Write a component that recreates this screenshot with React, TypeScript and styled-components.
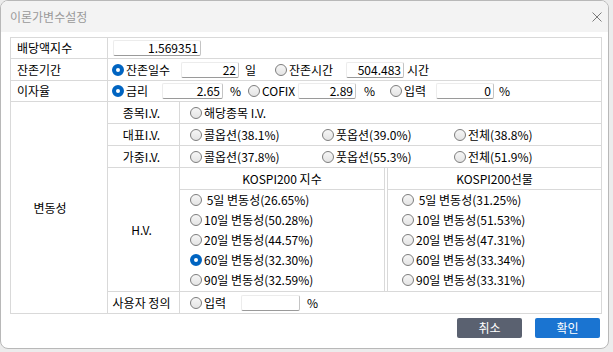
import React from "react";
import styled, { createGlobalStyle } from "styled-components";

const LINE = "#d9d9d9";

const GlobalStyle = createGlobalStyle`
  html, body {
    margin: 0;
    padding: 0;
    background: #ececec;
  }
  body {
    font-family: "Noto Sans CJK KR", "Noto Sans", sans-serif;
    font-size: 12px;
    color: #000;
  }
  * {
    box-sizing: border-box;
  }
`;

type Opt = { text: string; on?: boolean };

const ivRows: { label: string; opts: Opt[] }[] = [
  { label: "대표I.V.", opts: [{ text: "콜옵션(38.1%)" }, { text: "풋옵션(39.0%)" }, { text: "전체(38.8%)" }] },
  { label: "가중I.V.", opts: [{ text: "콜옵션(37.8%)" }, { text: "풋옵션(55.3%)" }, { text: "전체(51.9%)" }] },
];

const hvIndex: Opt[] = [
  { text: "\u00a05일 변동성(26.65%)" },
  { text: "10일 변동성(50.28%)" },
  { text: "20일 변동성(44.57%)" },
  { text: "60일 변동성(32.30%)", on: true },
  { text: "90일 변동성(32.59%)" },
];

const hvFutures: Opt[] = [
  { text: "\u00a05일 변동성(31.25%)" },
  { text: "10일 변동성(51.53%)" },
  { text: "20일 변동성(47.31%)" },
  { text: "60일 변동성(33.34%)" },
  { text: "90일 변동성(33.31%)" },
];

const Radio = ({ on, text, w, ml }: { on?: boolean; text: string; w?: number; ml?: number }) => (
  <OptLabel $w={w} $ml={ml}>
    <Dot $on={on} />
    <span>{text}</span>
  </OptLabel>
);

const App = () => {
  return (
    <>
      <GlobalStyle />
      <Window>
        <TitleBar>
          <Title>이론가변수설정</Title>
          <svg width="10" height="10" viewBox="0 0 10 10">
            <path d="M0.5 0.5 L9.5 9.5 M9.5 0.5 L0.5 9.5" stroke="#7a7a7a" strokeWidth="1" />
          </svg>
        </TitleBar>

        <Body>
          <Table>
            <RowLabel>배당액지수</RowLabel>
            <Controls $wide>
              <Field $w={88} $ml={1}>1.569351</Field>
            </Controls>

            <RowLabel>잔존기간</RowLabel>
            <Controls $wide>
              <Radio on text="잔존일수" w={62} />
              <Field $w={58} $ml={7}>22</Field>
              <Unit $w={12} $ml={6}>일</Unit>
              <Radio text="잔존시간" w={63} ml={18} />
              <Field $w={58} $ml={8}>504.483</Field>
              <Unit $ml={3}>시간</Unit>
            </Controls>

            <RowLabel>이자율</RowLabel>
            <Controls $wide>
              <Radio on text="금리" w={38} />
              <Field $w={61} $ml={12}>2.65</Field>
              <Unit $w={8} $ml={7}>%</Unit>
              <Radio text="COFIX" w={45} ml={10} />
              <Field $w={58} $ml={5}>2.89</Field>
              <Unit $w={8} $ml={8}>%</Unit>
              <Radio text="입력" w={40} ml={18} />
              <Field $w={58} $ml={6}>0</Field>
              <Unit $ml={5}>%</Unit>
            </Controls>

            <VolLabel>변동성</VolLabel>

            <SubLabel>종목I.V.</SubLabel>
            <Controls $pl={10}>
              <Radio text="해당종목 I.V." />
            </Controls>

            {ivRows.map((row) => (
              <React.Fragment key={row.label}>
                <SubLabel>{row.label}</SubLabel>
                <ChoiceRow>
                  {row.opts.map((o) => (
                    <Radio key={o.text} text={o.text} on={o.on} />
                  ))}
                </ChoiceRow>
              </React.Fragment>
            ))}

            <SubLabel>H.V.</SubLabel>
            <HVCell>
              <HVHead $side="l">KOSPI200 지수</HVHead>
              <HVHead $side="r">KOSPI200선물</HVHead>
              <HVList $side="l">
                {hvIndex.map((o) => (
                  <HVItem key={o.text}>
                    <Radio text={o.text} on={o.on} />
                  </HVItem>
                ))}
              </HVList>
              <HVList $side="r">
                {hvFutures.map((o) => (
                  <HVItem key={o.text}>
                    <Radio text={o.text} on={o.on} />
                  </HVItem>
                ))}
              </HVList>
            </HVCell>

            <SubLabel>사용자 정의</SubLabel>
            <Controls $pl={10}>
              <Radio text="입력" w={40} />
              <Field $w={59} $ml={11} />
              <Unit $ml={7}>%</Unit>
            </Controls>
          </Table>

          <Buttons>
            <Button $kind="cancel">취소</Button>
            <Button $kind="ok">확인</Button>
          </Buttons>
        </Body>
      </Window>
    </>
  );
};

const Window = styled.div`
  width: 609px;
  height: 349px;
  background: #fff;
  border: 1px solid #b8b8b8;
  border-radius: 8px;
  overflow: hidden;
  display: flex;
  flex-direction: column;
`;

const TitleBar = styled.div`
  flex: none;
  height: 31px;
  background: #f3f3f3;
  display: flex;
  align-items: center;
  justify-content: space-between;
  padding: 0 6px 0 9px;
`;

const Title = styled.div`
  color: #9a9a9a;
  font-size: 12px;
  line-height: 1;
`;

const Body = styled.div`
  flex: 1;
  display: flex;
  flex-direction: column;
  padding: 5px 0 0 9px;
`;

const Table = styled.div`
  display: grid;
  grid-template-columns: 96px 71px 1fr;
  grid-template-rows: 20px 21px 20px 21px 21px 21px 123px 21px;
  gap: 1px;
  width: 592px;
  background: ${LINE};
  border: 1px solid ${LINE};
  line-height: 1;
`;

const RowLabel = styled.div`
  grid-column: 1;
  background: #fff;
  display: flex;
  align-items: center;
  padding-left: 6px;
`;

const VolLabel = styled.div`
  grid-column: 1;
  grid-row: 4 / 9;
  background: #fff;
  display: flex;
  align-items: center;
  justify-content: center;
  padding-right: 18px;
`;

const SubLabel = styled.div`
  grid-column: 2;
  background: #fff;
  display: flex;
  align-items: center;
  justify-content: center;
  padding-right: 4px;
  white-space: nowrap;
`;

const Controls = styled.div<{ $wide?: boolean; $pl?: number }>`
  grid-column: ${(p) => (p.$wide ? "2 / 4" : "3")};
  background: #fff;
  display: flex;
  align-items: center;
  padding-left: ${(p) => p.$pl ?? 4}px;
`;

const ChoiceRow = styled.div`
  grid-column: 3;
  background: #fff;
  display: grid;
  grid-template-columns: repeat(3, 132px);
  align-items: center;
  padding-left: 10px;
`;

const OptLabel = styled.label<{ $w?: number; $ml?: number }>`
  display: flex;
  align-items: center;
  gap: 2px;
  flex: none;
  white-space: nowrap;
  width: ${(p) => (p.$w ? `${p.$w}px` : "auto")};
  margin-left: ${(p) => p.$ml ?? 0}px;
`;

const Dot = styled.span<{ $on?: boolean }>`
  flex: none;
  width: 12px;
  height: 12px;
  border-radius: 50%;
  background: ${(p) => (p.$on ? "#fff" : "linear-gradient(#f6f6f6, #e4e4e4)")};
  border: ${(p) => (p.$on ? "4px solid #0064c1" : "1px solid #7d7d7d")};
`;

const Field = styled.div<{ $w: number; $ml?: number }>`
  flex: none;
  width: ${(p) => p.$w}px;
  height: 16px;
  margin-left: ${(p) => p.$ml ?? 0}px;
  padding-right: 2px;
  display: flex;
  align-items: center;
  justify-content: flex-end;
  background: #fff;
  border: 1px solid #ececec;
  border-right-color: #c4c4c4;
  border-bottom-color: #9a9a9a;
  border-radius: 2px;
`;

const Unit = styled.span<{ $w?: number; $ml?: number }>`
  flex: none;
  width: ${(p) => (p.$w ? `${p.$w}px` : "auto")};
  margin-left: ${(p) => p.$ml ?? 0}px;
  white-space: nowrap;
`;

const HVCell = styled.div`
  grid-column: 3;
  background: #fff;
  display: grid;
  grid-template-columns: 205px 1fr;
  grid-template-rows: 22px 1fr;
  column-gap: 2px;
`;

const HVHead = styled.div<{ $side: "l" | "r" }>`
  display: flex;
  align-items: center;
  justify-content: center;
  border-bottom: 1px solid ${LINE};
  ${(p) => (p.$side === "l" ? "border-right" : "border-left")}: 1px solid ${LINE};
`;

const HVList = styled.div<{ $side: "l" | "r" }>`
  display: flex;
  flex-direction: column;
  padding-left: ${(p) => (p.$side === "l" ? 10 : 14)}px;
  ${(p) => (p.$side === "l" ? "border-right" : "border-left")}: 1px solid ${LINE};
`;

const HVItem = styled.div`
  height: 20px;
  display: flex;
  align-items: center;
`;

const Buttons = styled.div`
  display: flex;
  justify-content: flex-end;
  gap: 13px;
  margin-top: 4px;
  padding-right: 8px;
`;

const Button = styled.button<{ $kind: "ok" | "cancel" }>`
  width: 65px;
  height: 20px;
  padding: 0;
  border: none;
  border-radius: 2px;
  font-family: "Noto Sans CJK KR", "Noto Sans", sans-serif;
  font-size: 12px;
  line-height: 1;
  color: #fff;
  background: ${(p) => (p.$kind === "ok" ? "#1a74d1" : "#5a6170")};
`;

export default App;
